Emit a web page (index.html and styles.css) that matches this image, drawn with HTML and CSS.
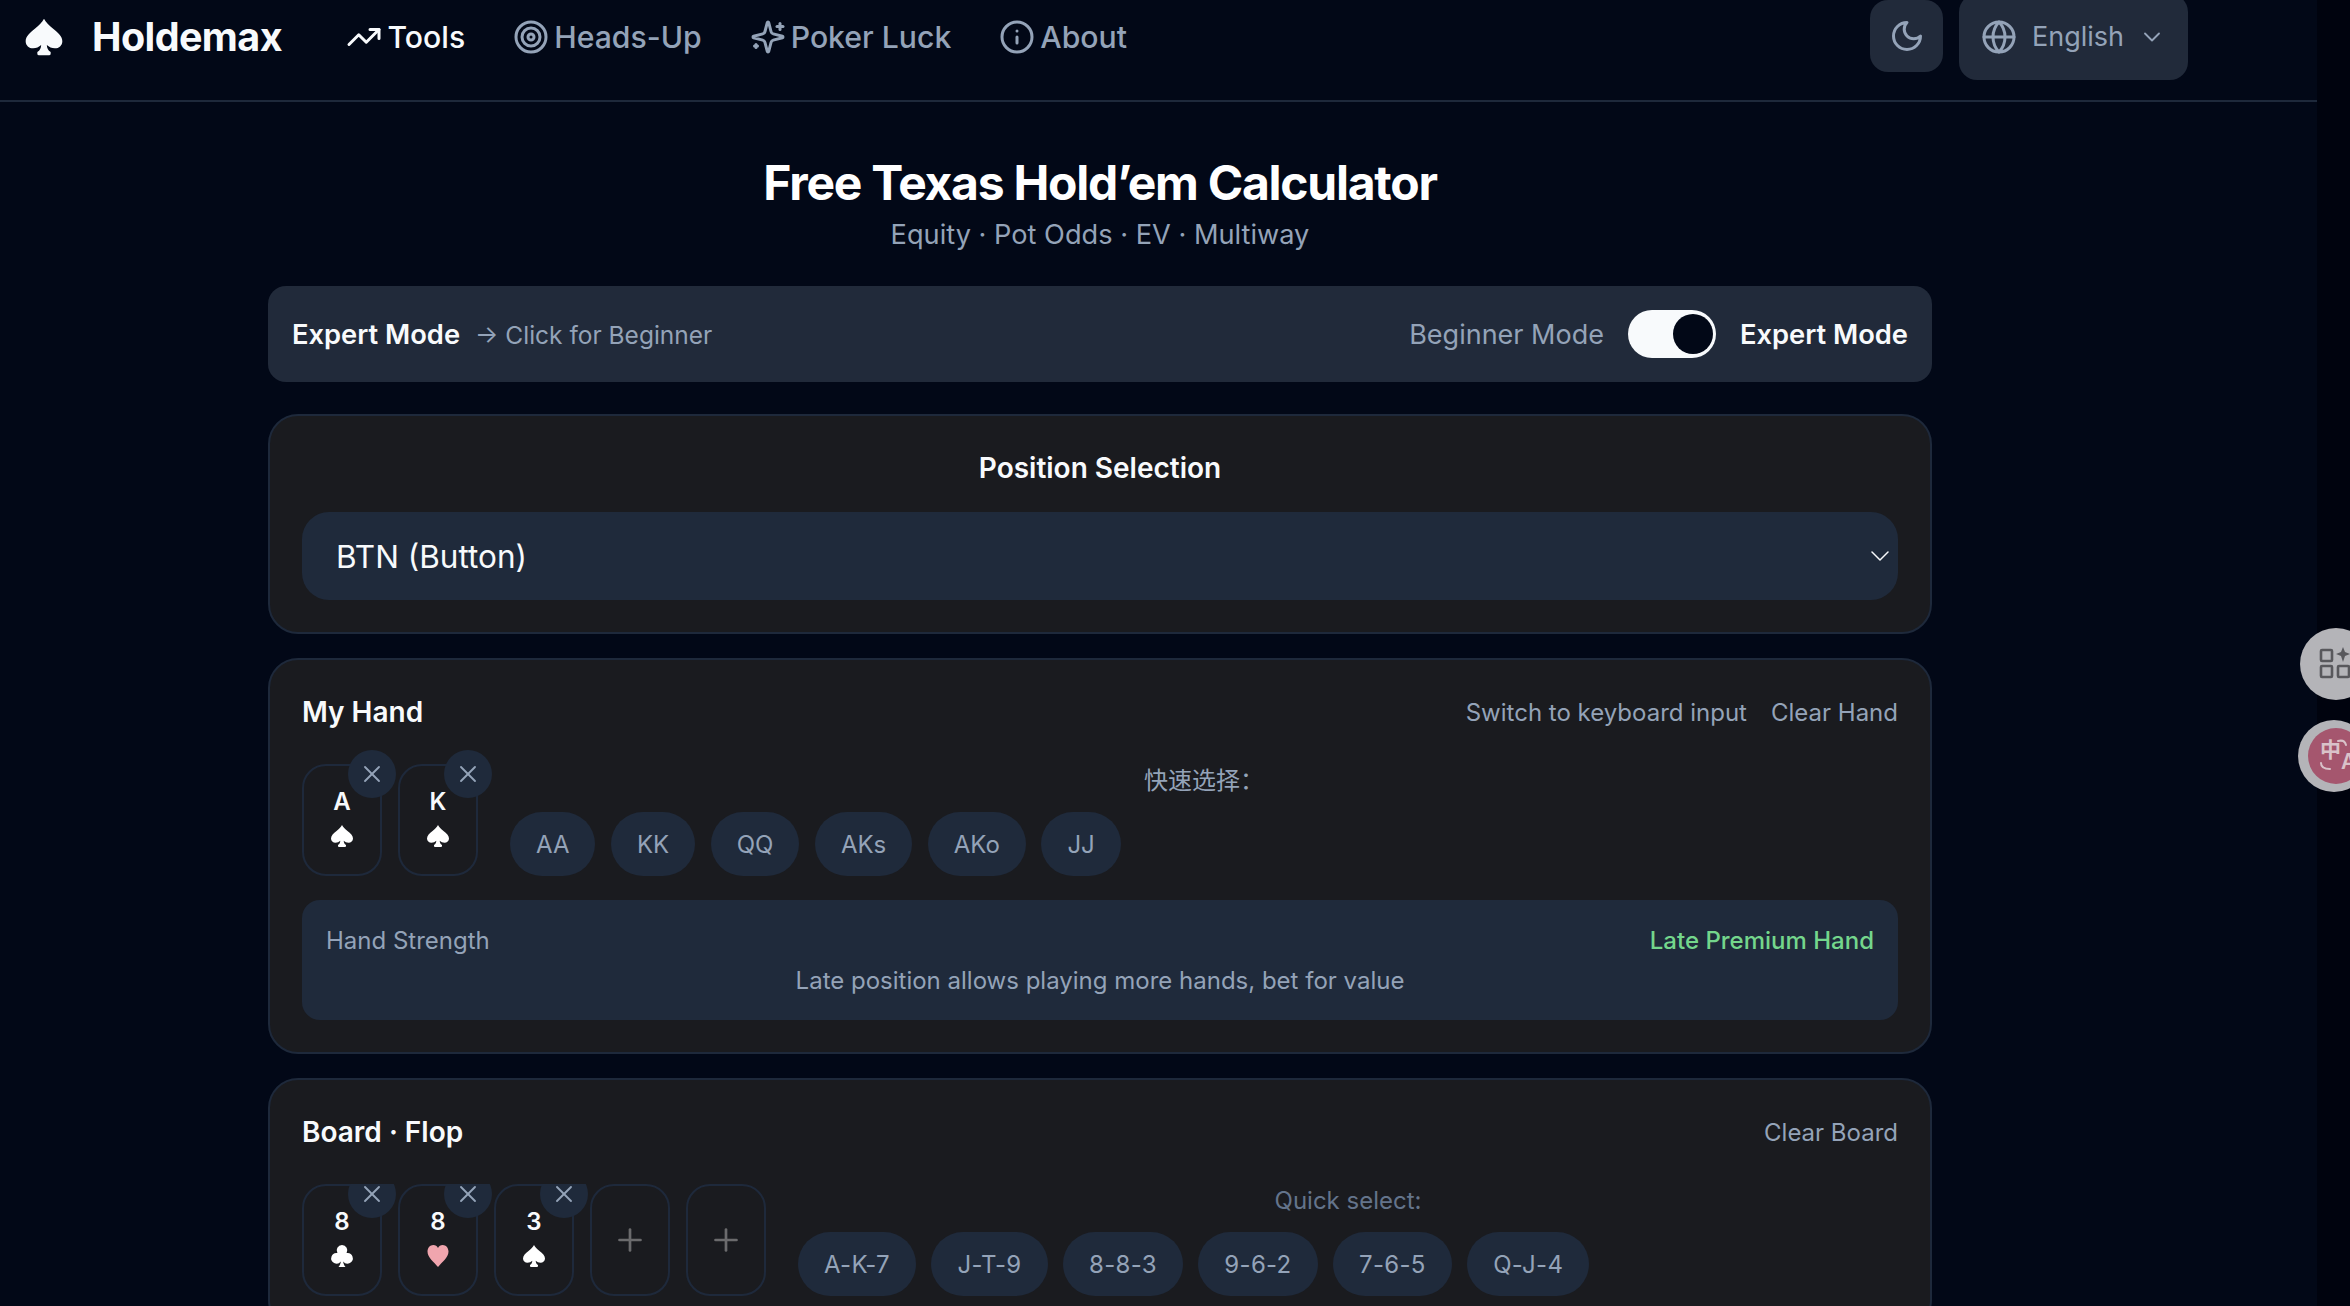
FILE: index.html
```html
<!DOCTYPE html>
<html lang="en">
<head>
    <meta charset="UTF-8">
    <title>Holdemax</title>
    <link rel="stylesheet" href="styles.css">
</head>
<body>
<div class="page">
    <header class="topbar">
        <a class="brand">
            <svg class="brandIcon" viewBox="0 0 24 24"><use href="#spade"/></svg>
            <span>Holdemax</span>
        </a>
        <nav class="mainNav">
            <a class="navLink active">
                <svg class="icon" viewBox="0 0 24 24"><polyline points="22 7 13.5 15.5 8.5 10.5 2 17"/><polyline points="16 7 22 7 22 13"/></svg>
                Tools
            </a>
            <a class="navLink">
                <svg class="icon" viewBox="0 0 24 24"><circle cx="12" cy="12" r="10"/><circle cx="12" cy="12" r="6"/><circle cx="12" cy="12" r="2"/></svg>
                Heads-Up
            </a>
            <a class="navLink">
                <svg class="icon" viewBox="0 0 24 24"><path d="M9.937 15.5A2 2 0 0 0 8.5 14.063l-6.135-1.582a.5.5 0 0 1 0-.962L8.5 9.936A2 2 0 0 0 9.937 8.5l1.582-6.135a.5.5 0 0 1 .963 0L14.063 8.5A2 2 0 0 0 15.5 9.937l6.135 1.581a.5.5 0 0 1 0 .964L15.5 14.063a2 2 0 0 0-1.437 1.437l-1.582 6.135a.5.5 0 0 1-.963 0z"/><path d="M20 3v4"/><path d="M22 5h-4"/><path d="M4 17v2"/><path d="M5 18H3"/></svg>
                Poker Luck
            </a>
            <a class="navLink">
                <svg class="icon" viewBox="0 0 24 24"><circle cx="12" cy="12" r="10"/><path d="M12 16v-4"/><path d="M12 8h.01"/></svg>
                About
            </a>
        </nav>
        <div class="topActions">
            <button class="themeBtn">
                <svg class="icon" viewBox="0 0 24 24"><path d="M12 3a6 6 0 0 0 9 9 9 9 0 1 1-9-9Z"/></svg>
            </button>
            <button class="langBtn">
                <svg class="icon" viewBox="0 0 24 24"><circle cx="12" cy="12" r="10"/><path d="M12 2a14.5 14.5 0 0 0 0 20 14.5 14.5 0 0 0 0-20"/><path d="M2 12h20"/></svg>
                <span class="langName">English</span>
                <svg class="langCaret" viewBox="0 0 24 24"><path d="m6 9 6 6 6-6"/></svg>
            </button>
        </div>
    </header>

    <main class="calculator">
        <div class="intro">
            <h1>Free Texas Hold’em Calculator</h1>
            <p>Equity · Pot Odds · EV · Multiway</p>
        </div>

        <div class="modeBar">
            <div class="modeLeft">
                <b>Expert Mode</b>
                <span>→ Click for Beginner</span>
            </div>
            <div class="modeRight">
                <span class="modeOff">Beginner Mode</span>
                <div class="toggle"><i></i></div>
                <b>Expert Mode</b>
            </div>
        </div>

        <section class="panel positionPanel">
            <h2>Position Selection</h2>
            <div class="selectBox">
                <span>BTN (Button)</span>
                <svg class="selectCaret" viewBox="0 0 18 10"><path d="M1 1l8 8 8-8"/></svg>
            </div>
        </section>

        <section class="panel handPanel">
            <div class="panelHead">
                <h3>My Hand</h3>
                <div class="panelLinks"><a>Switch to keyboard input</a><a>Clear Hand</a></div>
            </div>
            <div class="cardRow">
                <div class="slots">
                    <div class="slot">
                        <span class="rank">A</span>
                        <svg class="suit" viewBox="0 0 24 24"><use href="#spade"/></svg>
                        <span class="remove"><svg viewBox="0 0 24 24"><path d="M18 6 6 18"/><path d="m6 6 12 12"/></svg></span>
                    </div>
                    <div class="slot">
                        <span class="rank">K</span>
                        <svg class="suit" viewBox="0 0 24 24"><use href="#spade"/></svg>
                        <span class="remove"><svg viewBox="0 0 24 24"><path d="M18 6 6 18"/><path d="m6 6 12 12"/></svg></span>
                    </div>
                </div>
                <div class="quick">
                    <div class="quickLabel cjk">快速选择：</div>
                    <div class="pills">
                        <a class="pill">AA</a><a class="pill">KK</a><a class="pill">QQ</a><a class="pill">AKs</a><a class="pill">AKo</a><a class="pill">JJ</a>
                    </div>
                </div>
            </div>
            <div class="strengthBox">
                <div class="strengthTop"><span>Hand Strength</span><b>Late Premium Hand</b></div>
                <div class="strengthNote">Late position allows playing more hands, bet for value</div>
            </div>
        </section>

        <section class="panel boardPanel">
            <div class="panelHead">
                <h3>Board · Flop</h3>
                <div class="panelLinks"><a>Clear Board</a></div>
            </div>
            <div class="cardRow clipped">
                <div class="slots">
                    <div class="slot">
                        <span class="rank">8</span>
                        <svg class="suit" viewBox="0 0 24 24"><use href="#club"/></svg>
                        <span class="remove"><svg viewBox="0 0 24 24"><path d="M18 6 6 18"/><path d="m6 6 12 12"/></svg></span>
                    </div>
                    <div class="slot">
                        <span class="rank">8</span>
                        <svg class="suit red" viewBox="0 0 24 24"><use href="#heart"/></svg>
                        <span class="remove"><svg viewBox="0 0 24 24"><path d="M18 6 6 18"/><path d="m6 6 12 12"/></svg></span>
                    </div>
                    <div class="slot">
                        <span class="rank">3</span>
                        <svg class="suit" viewBox="0 0 24 24"><use href="#spade"/></svg>
                        <span class="remove"><svg viewBox="0 0 24 24"><path d="M18 6 6 18"/><path d="m6 6 12 12"/></svg></span>
                    </div>
                    <div class="slot empty"><svg viewBox="0 0 24 24"><path d="M5 12h14"/><path d="M12 5v14"/></svg></div>
                    <div class="slot empty"><svg viewBox="0 0 24 24"><path d="M5 12h14"/><path d="M12 5v14"/></svg></div>
                </div>
                <div class="quick">
                    <div class="quickLabel dim">Quick select:</div>
                    <div class="pills">
                        <a class="pill">A-K-7</a><a class="pill">J-T-9</a><a class="pill">8-8-3</a><a class="pill">9-6-2</a><a class="pill">7-6-5</a><a class="pill">Q-J-4</a>
                    </div>
                </div>
            </div>
        </section>
    </main>
</div>

<!-- browser extension buttons that sit over the page edge -->
<div class="extBtn extTools">
    <svg viewBox="0 0 36 36"><rect x="3" y="4" width="11" height="11" rx="1"/><rect x="3" y="20" width="11" height="11" rx="1"/><rect x="20" y="20" width="11" height="11" rx="1"/><path class="solid" d="M25 1l2 5 5 2-5 2-2 6-2-6-5-2 5-2z"/></svg>
</div>
<div class="extBtn extTranslate">
    <div class="extInner">
        <span class="extHan cjk">中</span><span class="extLat">A</span>
        <svg class="extArcs" viewBox="0 0 56 56"><path d="M30 13c4-1 7 0 8 4"/><path d="M13 35c0 4 3 6 9 6"/></svg>
    </div>
</div>

<svg class="defs" width="0" height="0">
    <defs>
        <path id="spade" d="M12 1C11 3 9 5 6.500 7 3.500 9.500 1 11.500 1 14.500 1 17 3 18.800 5.500 18.800 7.300 18.800 9 18 10.300 16.800 10.200 18.800 9.600 20 8 21V22Q8 23 9 23H15Q16 23 16 22V21C14.400 20 13.800 18.800 13.700 16.800 15 18 16.700 18.800 18.500 18.800 21 18.800 23 17 23 14.500 23 11.500 20.500 9.500 17.500 7 15 5 13 3 12 1Z"/>
        <path id="club" d="M12 1a5.300 5.300 0 0 0-4.600 8A5.300 5.300 0 1 0 10.800 17.400C10.600 19.500 10 21 8.500 23h7c-1.500-2-2.100-3.500-2.300-5.600A5.300 5.300 0 1 0 16.600 9 5.300 5.300 0 0 0 12 1Z"/>
        <path id="heart" d="M12 23C8 18 1.500 13.500 1.500 7.500 1.500 3.800 4.200 1 7.200 1 9.400 1 11.200 2.200 12 4c.8-1.800 2.600-3 4.800-3 3 0 5.700 2.800 5.700 6.500C22.500 13.500 16 18 12 23Z"/>
    </defs>
</svg>
</body>
</html>
```

FILE: styles.css
```css
* {
    box-sizing: border-box;
}

html, body {
    margin: 0;
    height: 1306px;
    overflow: hidden;
}

body {
    background: #00030e;
    color: #f8fafc;
    font-family: Inter, "Noto Sans", sans-serif;
}

svg {
    fill: none;
    stroke: currentColor;
    stroke-width: 2;
    stroke-linecap: round;
    stroke-linejoin: round;
}

.cjk {
    font-family: Inter, "Noto Sans CJK SC", sans-serif;
}

.defs {
    position: absolute;
}

.page {
    width: 2317px;
    height: 1306px;
    background: #020817;
}

/* top bar */
.topbar {
    display: flex;
    align-items: flex-start;
    height: 102px;
    padding-left: 24px;
    border-bottom: 2px solid #1e293b;
}

.brand {
    display: flex;
    align-items: center;
    gap: 28px;
    height: 74px;
    font-size: 39.5px;
    font-weight: 700;
    letter-spacing: -0.6px;
}

.brandIcon {
    width: 40px;
    height: 40px;
    margin-top: -1px;
    fill: #f8fafc;
    stroke: none;
}

.mainNav {
    display: flex;
    align-items: center;
    gap: 48px;
    height: 74px;
    margin-left: 64.5px;
}

.navLink {
    display: flex;
    align-items: center;
    gap: 5px;
    font-size: 30.2px;
    font-weight: 500;
    color: #94a3b8;
}

.navLink.active {
    color: #f8fafc;
}

.icon {
    width: 36px;
    height: 36px;
    flex: none;
}

.topActions {
    display: flex;
    align-items: flex-start;
    gap: 16px;
    margin-left: auto;
    margin-right: 129px;
}

.themeBtn, .langBtn {
    display: flex;
    align-items: center;
    border: 0;
    background: #212a3a;
    color: #94a3b8;
    font-family: inherit;
}

.themeBtn {
    justify-content: center;
    width: 73px;
    height: 72px;
    padding: 0;
    border-radius: 18px;
}

.langBtn {
    width: 229px;
    height: 86px;
    margin-top: -6px;
    padding: 0 0 0 22px;
    border-radius: 18px;
    font-size: 27px;
    gap: 15px;
}

.langName {
    margin-top: -2px;
}

.langCaret {
    width: 28px;
    height: 28px;
    margin-left: -1px;
    stroke-width: 1.6;
}

/* main column */
.calculator {
    width: 1664px;
    margin-left: 268px;
}

.intro {
    padding-top: 51px;
    text-align: center;
}

.intro h1 {
    margin: 0;
    font-size: 48px;
    line-height: 60px;
    font-weight: 700;
    letter-spacing: -1.25px;
    color: #fff;
}

.intro p {
    margin: 2px 0 0;
    font-size: 27.2px;
    line-height: 40px;
    color: #94a3b8;
}

.modeBar {
    display: flex;
    align-items: center;
    justify-content: space-between;
    height: 96px;
    margin-top: 31px;
    padding: 0 24px;
    background: #212a3a;
    border-radius: 18px;
    font-size: 27px;
}

.modeBar b {
    font-size: 27.3px;
    font-weight: 600;
}

.modeLeft {
    display: flex;
    align-items: center;
    gap: 15px;
}

.modeLeft span {
    margin-top: 2px;
    font-size: 24.5px;
    color: #94a3b8;
}

.modeRight {
    display: flex;
    align-items: center;
    gap: 24px;
}

.modeOff {
    font-weight: 400;
    color: #94a3b8;
}

.toggle {
    display: flex;
    align-items: center;
    justify-content: flex-end;
    width: 88px;
    height: 48px;
    padding-right: 3px;
    background: #f8fafc;
    border-radius: 24px;
}

.toggle i {
    width: 40px;
    height: 40px;
    background: #020817;
    border-radius: 50%;
}

.panel {
    margin-top: 24px;
    padding: 32px;
    background: #1a1b1f;
    border: 2px solid #1e293b;
    border-radius: 30px;
}

.positionPanel {
    margin-top: 32px;
}

.positionPanel h2 {
    margin: 0 0 24px;
    font-size: 28px;
    line-height: 40px;
    font-weight: 600;
    text-align: center;
}

.selectBox {
    display: flex;
    align-items: center;
    justify-content: space-between;
    height: 88px;
    padding: 0 9px 0 34px;
    background: #1f2a3b;
    border-radius: 27px;
    font-size: 31.5px;
}

.selectCaret {
    width: 18px;
    height: 10px;
    stroke-width: 1.5;
}

.panelHead {
    display: flex;
    align-items: center;
    justify-content: space-between;
    margin-bottom: 32px;
}

.panelHead h3 {
    margin: 0;
    font-size: 28px;
    line-height: 40px;
    font-weight: 600;
}

.panelLinks {
    display: flex;
    gap: 24px;
    font-size: 24px;
    color: #94a3b8;
}

.cardRow {
    display: flex;
    gap: 32px;
}

.cardRow.clipped {
    overflow: hidden;
}

.slots {
    display: flex;
    gap: 16px;
}

.slot {
    position: relative;
    display: flex;
    flex-direction: column;
    align-items: center;
    width: 80px;
    height: 112px;
    padding-top: 18px;
    border: 2px solid #1e293b;
    border-radius: 24px;
}

.rank {
    font-size: 24px;
    line-height: 36px;
    font-weight: 600;
}

.suit {
    width: 24px;
    height: 24px;
    margin-top: 4px;
    fill: #fff;
    stroke: none;
}

.suit.red {
    fill: #f0a5ae;
}

.remove {
    position: absolute;
    top: -16px;
    right: -16px;
    display: flex;
    align-items: center;
    justify-content: center;
    width: 48px;
    height: 48px;
    background: #1f2a3b;
    border-radius: 50%;
    color: #94a3b8;
}

.remove svg {
    width: 28px;
    height: 28px;
    stroke-width: 1.6;
}

.slot.empty {
    justify-content: center;
    padding-top: 0;
    color: #6b6b6d;
}

.slot.empty svg {
    width: 36px;
    height: 36px;
    stroke-width: 1.8;
}

.quick {
    flex: 1;
}

.quickLabel {
    height: 32px;
    margin-bottom: 16px;
    font-size: 24px;
    line-height: 34px;
    text-align: center;
    color: #94a3b8;
}

.quickLabel.dim {
    color: #64748b;
}

.pills {
    display: flex;
    gap: 15.5px;
}

.pill {
    display: flex;
    align-items: center;
    height: 64px;
    padding: 0 26px;
    background: #1f2a3b;
    border-radius: 32px;
    font-size: 24px;
    color: #94a3b8;
}

.boardPanel .pill {
    letter-spacing: 0.3px;
}

.strengthBox {
    margin-top: 24px;
    padding: 21px 24px 19px;
    background: #1f2a3b;
    border-radius: 18px;
    font-size: 24px;
    line-height: 40px;
    color: #94a3b8;
}

.strengthTop {
    display: flex;
    justify-content: space-between;
}

.strengthTop b {
    font-weight: 500;
    color: #74d68c;
}

.strengthNote {
    text-align: center;
}

/* extension buttons */
.extBtn {
    position: fixed;
    width: 72px;
    height: 72px;
    background: #b4b4b8;
    border-radius: 50%;
}

.extTools {
    left: 2300px;
    top: 628px;
    color: #58585c;
}

.extTools svg {
    width: 36px;
    height: 36px;
    margin: 18px 0 0 18px;
    stroke-width: 2.6;
}

.extTools .solid {
    fill: currentColor;
    stroke: none;
}

.extTranslate {
    left: 2298px;
    top: 720px;
}

.extInner {
    position: relative;
    display: flex;
    width: 56px;
    height: 56px;
    margin: 8px 0 0 10px;
    background: #a5566e;
    border-radius: 50%;
    color: #d9c2c9;
    font-size: 21px;
    line-height: 56px;
    font-weight: 600;
}

.extHan {
    margin-left: 12px;
    margin-top: -6px;
}

.extLat {
    margin-top: 6px;
}

.extArcs {
    position: absolute;
    left: 0;
    top: 0;
    width: 56px;
    height: 56px;
}
```
